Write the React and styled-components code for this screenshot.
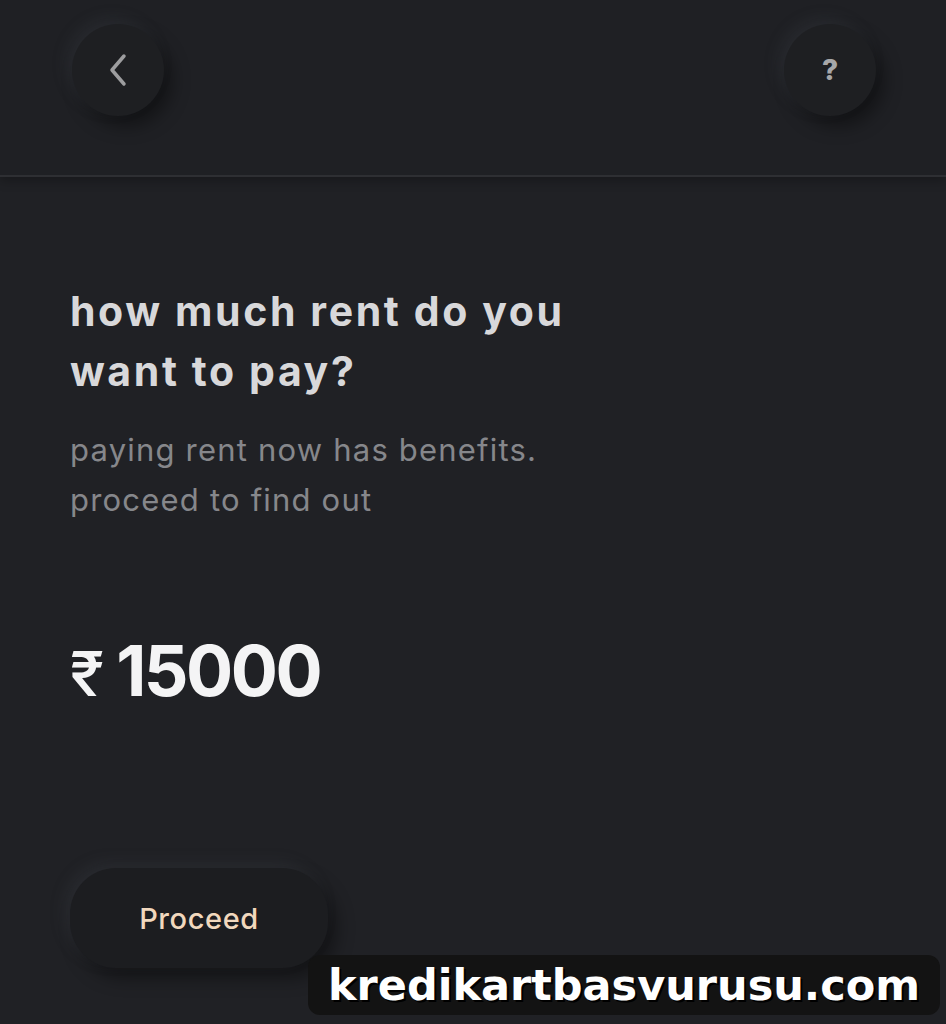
import React from 'react';
import styled, { createGlobalStyle } from 'styled-components';

const Global = createGlobalStyle`
  html, body { margin: 0; padding: 0; background: #202125; }
  body { font-family: "Inter", sans-serif; }
`;

const Screen = styled.div`
  width: 946px;
  height: 1024px;
  background: #202125;
  display: flex;
  flex-direction: column;
  position: relative;
  overflow: hidden;
`;

const Header = styled.header`
  height: 175px;
  padding: 0 70px 0 72px;
  display: flex;
  align-items: flex-start;
  justify-content: space-between;
  background: #1f2024;
  border-bottom: 2px solid #2e2f33;
  box-shadow: 0 4px 10px rgba(0, 0, 0, 0.25);
`;

const RoundButton = styled.button`
  margin-top: 24px;
  width: 92px;
  height: 92px;
  border-radius: 50%;
  border: none;
  background: #1e1f22;
  box-shadow: -6px -6px 14px rgba(60, 62, 68, 0.3), 8px 10px 18px rgba(0, 0, 0, 0.4);
  color: #a7a7a9;
  display: flex;
  align-items: center;
  justify-content: center;
  font-family: "Inter", sans-serif;
  font-weight: 800;
  font-size: 28px;
  padding: 0;
`;

const Body = styled.main`
  flex: 1;
  display: flex;
  flex-direction: column;
  padding: 104px 70px 0;
`;

const Title = styled.h1`
  margin: 0;
  font-family: "Inter", sans-serif;
  font-weight: 700;
  font-size: 41px;
  line-height: 60px;
  color: #d8d8da;
  letter-spacing: 2.6px;
`;

const Sub = styled.p`
  margin: 24px 0 0;
  font-family: "Inter", sans-serif;
  font-weight: 400;
  font-size: 31px;
  line-height: 50px;
  color: #86878b;
  letter-spacing: 1.2px;
`;

const Amount = styled.div`
  margin-top: 103px;
  display: flex;
  align-items: baseline;
  gap: 12px;
  color: #f4f4f5;
  font-family: "Inter", sans-serif;
  font-weight: 700;
`;

const Rupee = styled.span`
  font-size: 62px;
  font-weight: 500;
`;

const Digits = styled.span`
  font-size: 70px;
  letter-spacing: -2.5px;
`;

const Proceed = styled.button`
  margin-top: 155px;
  width: 258px;
  height: 100px;
  border-radius: 46px;
  border: none;
  background: #1c1d20;
  box-shadow: -6px -6px 14px rgba(60, 62, 68, 0.3), 8px 10px 18px rgba(0, 0, 0, 0.4);
  color: #f1d8bd;
  font-family: "Inter", sans-serif;
  font-weight: 500;
  font-size: 29px;
  letter-spacing: 0.6px;
`;

const Watermark = styled.div`
  position: absolute;
  left: 308px;
  top: 955px;
  width: 632px;
  height: 60px;
  border-radius: 12px;
  background: #131313;
  display: flex;
  align-items: center;
  justify-content: center;
  color: #ffffff;
  font-family: "DejaVu Sans", sans-serif;
  font-weight: 700;
  font-size: 43px;
  text-shadow: 2px 2px 0 #000;
`;

export default function App() {
  return (
    <Screen>
      <Global />
      <Header>
        <RoundButton aria-label="back">
          <svg width="22" height="34" viewBox="0 0 22 34" fill="none">
            <path d="M17 3 L5 17 L17 31" stroke="#9d9d9f" strokeWidth="3.5" strokeLinecap="round" strokeLinejoin="round" />
          </svg>
        </RoundButton>
        <RoundButton aria-label="help">?</RoundButton>
      </Header>
      <Body>
        <Title>
          how much rent do you
          <br />
          want to pay?
        </Title>
        <Sub>
          paying rent now has benefits.
          <br />
          proceed to find out
        </Sub>
        <Amount>
          <Rupee>₹</Rupee>
          <Digits>15000</Digits>
        </Amount>
        <Proceed>Proceed</Proceed>
      </Body>
      <Watermark>kredikartbasvurusu.com</Watermark>
    </Screen>
  );
}
